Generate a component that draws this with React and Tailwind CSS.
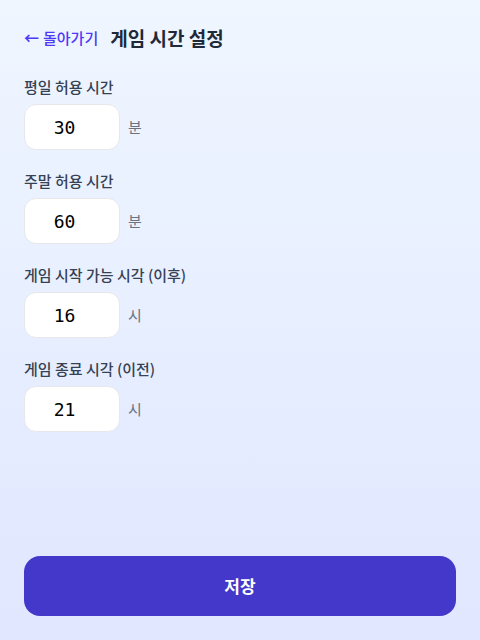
import React, { useState } from 'react'

const fields = [
  { key: 'weekday', label: '평일 허용 시간', unit: '분', value: 30 },
  { key: 'weekend', label: '주말 허용 시간', unit: '분', value: 60 },
  { key: 'start', label: '게임 시작 가능 시각 (이후)', unit: '시', value: 16 },
  { key: 'end', label: '게임 종료 시각 (이전)', unit: '시', value: 21 },
]

const Field = ({ label, unit, value, onChange }) => {
  return (
    <div className="flex flex-col gap-[7px]">
      <label className="text-[15px] font-medium leading-5 text-gray-700">{label}</label>
      <div className="flex items-center gap-2">
        <input
          type="number"
          value={value}
          onChange={(e) => onChange(e.target.value)}
          className="h-[46px] w-24 rounded-xl border border-gray-200 bg-white text-center text-lg text-black outline-none"
          style={{ fontFamily: '"DejaVu Sans Mono", monospace' }}
        />
        <span className="text-[15px] text-gray-500">{unit}</span>
      </div>
    </div>
  )
}

const App = () => {
  const [values, setValues] = useState(
    Object.fromEntries(fields.map((f) => [f.key, f.value]))
  )

  return (
    <div
      className="flex min-h-screen flex-col bg-gradient-to-b from-[#eff6ff] to-[#e0e7ff] px-6 pt-6 pb-6"
      style={{ fontFamily: '"Noto Sans CJK KR", "Noto Sans", sans-serif' }}
    >
      {/* header */}
      <div className="flex h-7 items-center gap-3">
        <button className="flex items-center gap-1 text-[15px] font-medium text-indigo-600">
          <span className="font-bold">←</span>
          <span>돌아가기</span>
        </button>
        <h1 className="text-[19px] font-bold text-gray-800">게임 시간 설정</h1>
      </div>

      <div className="mt-[25px] flex flex-col gap-[21px]">
        {fields.map((f) => (
          <Field
            key={f.key}
            label={f.label}
            unit={f.unit}
            value={values[f.key]}
            onChange={(v) => setValues({ ...values, [f.key]: v })}
          />
        ))}
      </div>

      <button className="mt-auto h-[60px] w-full rounded-2xl bg-[#4338ca] text-[17px] font-bold text-white">
        저장
      </button>
    </div>
  )
}

export default App
